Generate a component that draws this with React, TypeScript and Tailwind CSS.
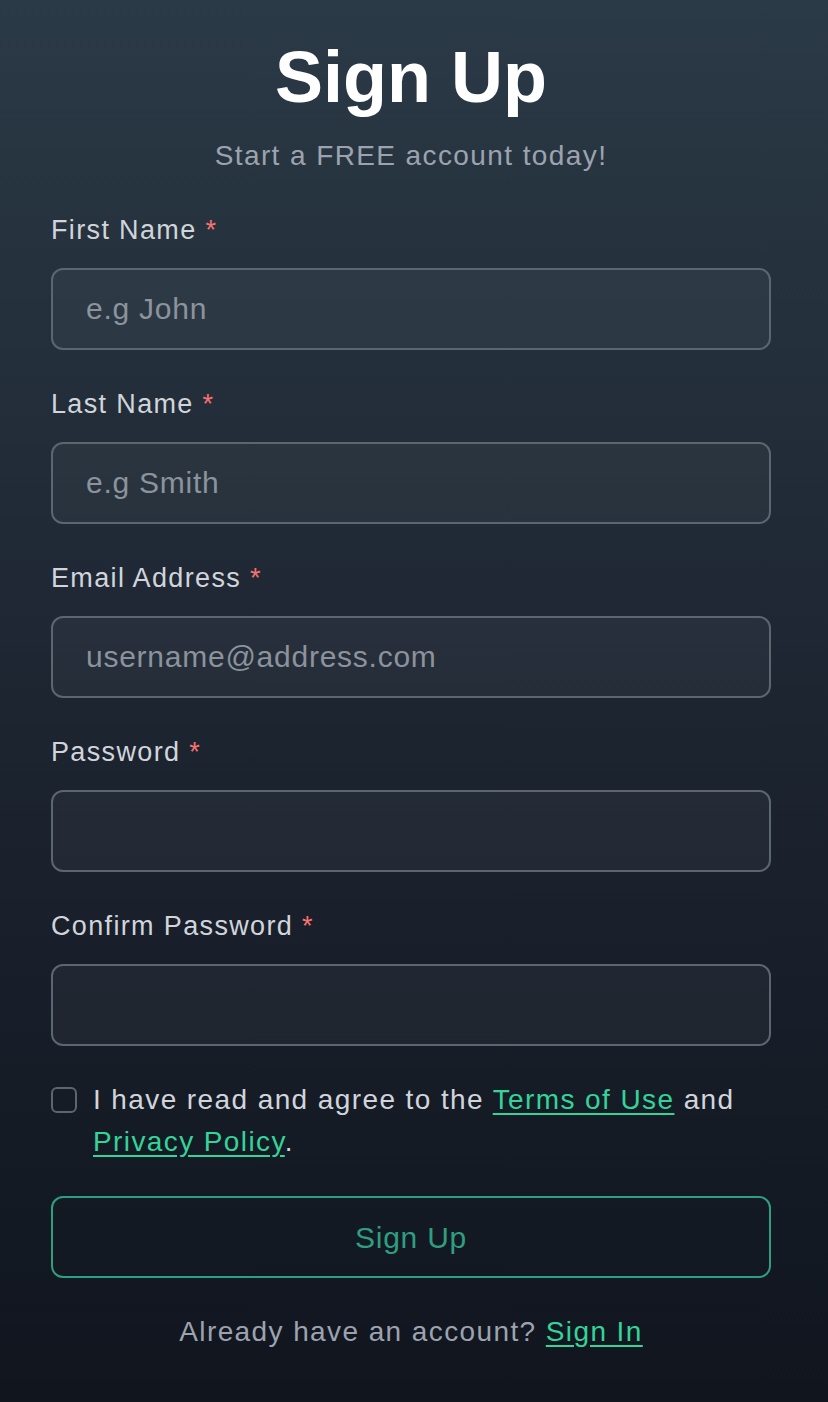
import { useState } from 'react';

type Field = {
  label: string;
  placeholder?: string;
  type?: string;
};

const fields: Field[] = [
  { label: 'First Name', placeholder: 'e.g John' },
  { label: 'Last Name', placeholder: 'e.g Smith' },
  { label: 'Email Address', placeholder: 'username@address.com', type: 'email' },
  { label: 'Password', type: 'password' },
  { label: 'Confirm Password', type: 'password' },
];

export default function App() {
  const [agreed, setAgreed] = useState(false);

  return (
    <div
      className="min-h-[1402px] w-full bg-gradient-to-b from-[#2a3a46] via-[#1d2531] to-[#10151e] pl-[51px] pr-[57px] pt-[37px] text-[#d1d5db]"
      style={{ fontFamily: '"Liberation Sans", Arial, sans-serif' }}
    >
      {/* Header */}
      <h1 className="text-center text-[72px] font-bold leading-[80px] text-white">Sign Up</h1>
      <p className="mt-[21px] text-center text-[28px] leading-[36px] tracking-wider text-[#9ca3af]">
        Start a FREE account today!
      </p>

      {/* Fields */}
      <form className="mt-[38px] flex flex-col gap-[36px]" onSubmit={(e) => e.preventDefault()}>
        {fields.map((field) => (
          <div key={field.label} className="flex flex-col gap-[20px]">
            <label className="text-[27px] leading-[36px] tracking-wider text-[#d1d5db]">
              {field.label} <span className="text-[#f87171]">*</span>
            </label>
            <input
              type={field.type ?? 'text'}
              placeholder={field.placeholder}
              className="h-[82px] w-full rounded-[12px] border-2 border-[#5c6670] bg-white/[0.04] px-[33px] text-[30px] tracking-wide text-white outline-none placeholder:text-[#8b939c]"
            />
          </div>
        ))}

        {/* Terms */}
        <div className="-mt-[3px] flex items-start gap-[16px]">
          <button
            type="button"
            onClick={() => setAgreed(!agreed)}
            className={`mt-[8px] h-[26px] w-[26px] shrink-0 rounded-[6px] border-2 ${
              agreed ? 'border-[#34d399] bg-[#34d399]' : 'border-[#5c6670] bg-transparent'
            }`}
          />
          <p className="text-[28px] leading-[42px] tracking-wider text-[#d1d5db]">
            I have read and agree to the{' '}
            <a href="#" className="text-[#34d399] underline underline-offset-4">
              Terms of Use
            </a>{' '}
            and{' '}
            <a href="#" className="text-[#34d399] underline underline-offset-4">
              Privacy Policy
            </a>
            .
          </p>
        </div>

        <button
          type="submit"
          className="-mt-[3px] h-[82px] w-full rounded-[12px] border-2 border-[#2f9e80] text-[30px] tracking-wide text-[#2f9e80]"
        >
          Sign Up
        </button>
      </form>

      {/* Footer */}
      <p className="mt-[36px] text-center text-[28px] leading-[36px] tracking-wider text-[#9ca3af]">
        Already have an account?{' '}
        <a href="#" className="text-[#34d399] underline underline-offset-4">
          Sign In
        </a>
      </p>
    </div>
  );
}
